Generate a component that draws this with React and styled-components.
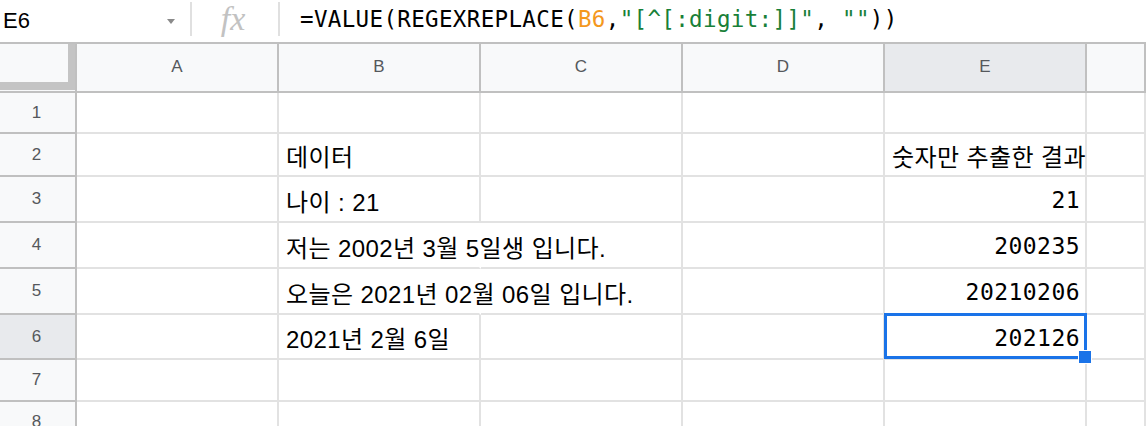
import React from "react";
import styled, { createGlobalStyle } from "styled-components";

const GlobalStyle = createGlobalStyle`
  html, body {
    margin: 0;
    padding: 0;
    background: #fff;
    overflow: hidden;
  }
`;

const COL_W = 202;
const ROW_HEADER_W = 77;
const GRID = "#e2e2e2";
const HEAD_LINE = "#c0c0c0";

const Page = styled.div`
  width: 1146px;
  height: 426px;
  overflow: hidden;
  font-family: "Liberation Sans", "Noto Sans CJK KR", sans-serif;
  color: #000;
`;

// formula bar
const FormulaBar = styled.div`
  height: 42px;
  display: flex;
  align-items: center;
  border-bottom: 2px solid ${HEAD_LINE};
`;

const NameBox = styled.div`
  width: 190px;
  height: 100%;
  display: flex;
  align-items: center;
  justify-content: space-between;
  padding: 0 15px 0 3px;
  box-sizing: border-box;
  font-size: 22px;
`;

const DropArrow = styled.span`
  width: 0;
  height: 0;
  border-left: 4.5px solid transparent;
  border-right: 4.5px solid transparent;
  border-top: 5px solid #8a8a8a;
`;

const Divider = styled.div`
  width: 2px;
  height: 34px;
  margin-top: -4px;
  background: #e0e0e0;
`;

const FxBox = styled.div`
  width: 86px;
  height: 36px;
  display: flex;
  align-items: center;
  justify-content: center;
  font-family: "Liberation Serif", serif;
  font-style: italic;
  font-size: 34px;
  line-height: 36px;
  color: #c2c2c2;
  margin-top: -4px;
  padding-right: 4px;
  box-sizing: border-box;
`;

const FormulaText = styled.div`
  padding-left: 20px;
  font-family: "DejaVu Sans Mono", monospace;
  font-size: 22.5px;
  letter-spacing: 0.35px;
  white-space: pre;
  margin-top: -4px;
`;

const Ref = styled.span`
  color: #f4981d;
`;

const Str = styled.span`
  color: #188038;
`;

// grid
const Sheet = styled.div`
  position: relative;
`;

const Row = styled.div`
  display: flex;
  height: ${(p) => p.$h}px;
`;

const Corner = styled.div`
  width: ${ROW_HEADER_W}px;
  flex: none;
  box-sizing: border-box;
  background: #f8f9fa;
  border-right: 2px solid ${HEAD_LINE};
  border-bottom: 2px solid ${HEAD_LINE};
`;

const CornerHandle = styled.div`
  width: 75px;
  height: 46px;
  box-sizing: border-box;
  border-right: 7px solid #c4c4c4;
  border-bottom: 8px solid #c4c4c4;
`;

const ColHeader = styled.div`
  width: ${(p) => (p.$last ? "auto" : `${COL_W}px`)};
  flex: ${(p) => (p.$last ? 1 : "none")};
  box-sizing: border-box;
  display: flex;
  align-items: center;
  justify-content: center;
  background: ${(p) => (p.$active ? "#e8eaed" : "#f8f9fa")};
  border-right: 2px solid ${HEAD_LINE};
  border-bottom: 2px solid ${HEAD_LINE};
  font-size: 17px;
  color: #55585c;
  padding-bottom: 2px;
`;

const RowHeader = styled.div`
  width: ${ROW_HEADER_W}px;
  flex: none;
  box-sizing: border-box;
  display: flex;
  align-items: center;
  justify-content: center;
  background: ${(p) => (p.$active ? "#e8eaed" : "#f8f9fa")};
  border-right: 2px solid ${HEAD_LINE};
  border-bottom: 2px solid ${HEAD_LINE};
  font-size: 17px;
  color: #55585c;
  padding-right: 2px;
`;

const Cell = styled.div`
  width: ${(p) => (p.$last ? "auto" : `${COL_W}px`)};
  flex: ${(p) => (p.$last ? 1 : "none")};
  box-sizing: border-box;
  display: flex;
  align-items: center;
  justify-content: ${(p) => (p.$num ? "flex-end" : "flex-start")};
  border-right: 2px solid ${(p) => (p.$spill ? "transparent" : GRID)};
  border-bottom: 2px solid ${GRID};
  padding: 2px 5px 0 7px;
  white-space: nowrap;
  overflow: visible;
  font-size: ${(p) => (p.$num ? "23px" : "24px")};
  font-family: ${(p) =>
    p.$num ? `"DejaVu Sans Mono", monospace` : `"Liberation Sans", "Noto Sans CJK KR", sans-serif`};
  letter-spacing: ${(p) => (p.$num ? "0.45px" : "0.4px")};
`;

const Selection = styled.div`
  position: absolute;
  left: 884px;
  top: 269px;
  width: 203px;
  height: 46px;
  box-sizing: border-box;
  border: 3px solid #1a73e8;
  pointer-events: none;
`;

const FillHandle = styled.div`
  position: absolute;
  right: -8px;
  bottom: -8px;
  width: 12px;
  height: 12px;
  background: #1a73e8;
  border: 1px solid #fff;
`;

const cols = ["A", "B", "C", "D", "E"];

const rows = [
  { n: 1, h: 41, b: "", e: "" },
  { n: 2, h: 43, b: "데이터", e: "숫자만 추출한 결과" },
  { n: 3, h: 46, b: "나이 : 21", e: "21", num: true },
  { n: 4, h: 46, b: "저는 2002년 3월 5일생 입니다.", e: "200235", num: true, spill: true },
  { n: 5, h: 46, b: "오늘은 2021년 02월 06일 입니다.", e: "20210206", num: true, spill: true },
  { n: 6, h: 45, b: "2021년 2월 6일", e: "202126", num: true, active: true },
  { n: 7, h: 42, b: "", e: "" },
  { n: 8, h: 42, b: "", e: "" },
];

function App() {
  return (
    <Page>
      <GlobalStyle />
      <FormulaBar>
        <NameBox>
          E6
          <DropArrow />
        </NameBox>
        <Divider />
        <FxBox>fx</FxBox>
        <Divider />
        <FormulaText>
          =VALUE(REGEXREPLACE(<Ref>B6</Ref>,<Str>"[^[:digit:]]"</Str>, <Str>""</Str>))
        </FormulaText>
      </FormulaBar>

      <Sheet>
        <Row $h={49}>
          <Corner>
            <CornerHandle />
          </Corner>
          {cols.map((c) => (
            <ColHeader key={c} $active={c === "E"}>
              {c}
            </ColHeader>
          ))}
          <ColHeader $last />
        </Row>

        {rows.map((r) => (
          <Row key={r.n} $h={r.h}>
            <RowHeader $active={r.active}>{r.n}</RowHeader>
            <Cell />
            <Cell $spill={r.spill}>{r.b}</Cell>
            <Cell />
            <Cell />
            <Cell $num={r.num}>{r.e}</Cell>
            <Cell $last />
          </Row>
        ))}

        <Selection>
          <FillHandle />
        </Selection>
      </Sheet>
    </Page>
  );
}

export default App;
